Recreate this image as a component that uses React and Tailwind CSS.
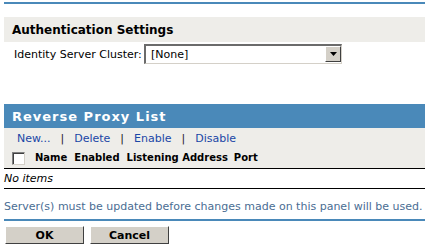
import React from 'react';

const Link = ({ children }) => (
  <span className="text-[#1a46a6] cursor-pointer">{children}</span>
);

const Sep = () => <span className="text-[#222] px-[10px]">|</span>;

export default function App() {
  return (
    <div className="w-[425px] h-[249px] overflow-hidden bg-white pl-1 text-[12px] leading-none text-black font-['DejaVu_Sans',sans-serif]">
      {/* top rule */}
      <div className="mt-[2px] h-[2px] bg-[#4a89b9]" />

      {/* Authentication Settings */}
      <div className="mt-[13px] h-[25px] bg-[#eeede9] flex items-center pl-2 font-bold text-[12px]">
        Authentication Settings
      </div>
      <div className="mt-[2px] h-[20px] flex items-center pl-[10px]">
        <span className="w-[130px] text-[11px]">Identity Server Cluster:</span>
        <div className="w-[198px] h-[20px] flex border-t-2 border-l-2 border-[#6b6b6b] border-r border-b border-r-[#d4d0c8] border-b-[#d4d0c8] bg-white">
          <span className="flex-1 pl-[5px] self-center text-[11px]">[None]</span>
          <div className="w-[16px] h-[16px] bg-[#d4d0c8] border border-t-white border-l-white border-r-[#404040] border-b-[#404040] flex items-center justify-center">
            <svg width="7" height="4" viewBox="0 0 7 4">
              <path d="M0 0h7L3.5 4z" fill="#000" />
            </svg>
          </div>
        </div>
      </div>

      {/* Reverse Proxy List */}
      <div className="mt-[40px] h-[24px] bg-[#4a89b9] flex items-center pl-2 text-white font-bold text-[13px] tracking-[1px]">
        Reverse Proxy List
      </div>
      <div className="bg-[#eeede9]">
        <div className="h-[20px] flex items-center pl-[13px] text-[11px]">
          <Link>New...</Link>
          <Sep />
          <Link>Delete</Link>
          <Sep />
          <Link>Enable</Link>
          <Sep />
          <Link>Disable</Link>
        </div>
        <div className="h-[21px] flex items-center pl-[8px] font-bold text-[10px] border-b border-black">
          <span className="w-[13px] h-[13px] border border-[#808080] border-r-[#d4d0c8] border-b-[#d4d0c8] bg-white shadow-[inset_1px_1px_0_#404040] mr-[10px]" />
          <span className="mr-[7px]">Name</span>
          <span className="mr-[7px]">Enabled</span>
          <span className="mr-[6px]">Listening Address</span>
          <span>Port</span>
        </div>
      </div>
      <div className="h-[20px] flex items-center italic text-[11px] border-b border-black">
        No items
      </div>

      <div className="mt-[12px] text-[11px] text-[#4a6d93]">
        Server(s) must be updated before changes made on this panel will be used.
      </div>
      <div className="mt-[7px] h-[2px] bg-[#4a89b9]" />

      <div className="mt-[5px] pl-[1px] flex gap-[6px]">
        <button className="w-[79px] h-[18px] bg-[#d4d0c8] border border-t-white border-l-white border-r-[#404040] border-b-[#404040] font-bold text-[11px] flex items-center justify-center">
          OK
        </button>
        <button className="w-[79px] h-[18px] bg-[#d4d0c8] border border-t-white border-l-white border-r-[#404040] border-b-[#404040] font-bold text-[11px] flex items-center justify-center">
          Cancel
        </button>
      </div>
    </div>
  );
}
